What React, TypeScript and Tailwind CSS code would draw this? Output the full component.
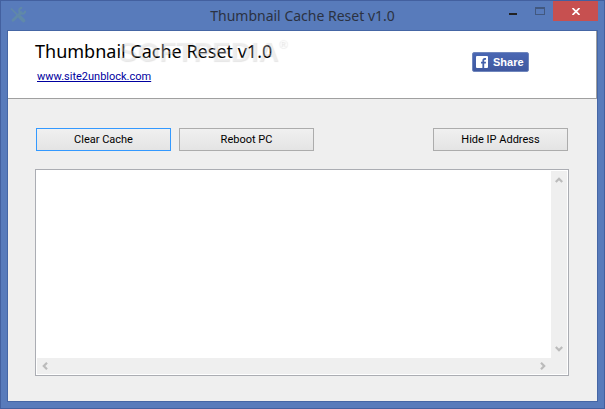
import { useState } from "react";

export default function App() {
  const [log, setLog] = useState("");

  return (
    <div className="flex min-h-screen flex-col border border-[#43609f] bg-[#587bbb] px-[6px] pb-[6px] font-['Noto_Sans',sans-serif] text-black">
      <TitleBar />
      <main className="flex grow flex-col border border-[#4566a5] bg-[#efefef]">
        <Header />
        <div className="flex grow flex-col pt-[29px] pr-7 pb-[25px] pl-[27px]">
          <div className="flex gap-2 px-px">
            <FormButton label="Clear Cache" focused onClick={() => setLog("")} />
            <FormButton label="Reboot PC" />
            <div className="grow" />
            <FormButton label="Hide IP Address" />
          </div>
          <LogBox value={log} onChange={setLog} />
        </div>
      </main>
    </div>
  );
}

function TitleBar() {
  return (
    <div className="grid h-[29px] grid-cols-[1fr_auto_1fr] items-start">
      {/* Crossed screwdriver and wrench */}
      <svg viewBox="0 0 16 16" className="mt-[6px] ml-[3px] h-4 w-4 text-[#6089a8]" fill="none" stroke="currentColor">
        <path d="M3 13.200 11 5.500" strokeWidth="2.800" strokeLinecap="round" />
        <path d="M15.200 3.800a3 3 0 1 1-3-3" strokeWidth="2" />
        <path d="M1 1.500 9.500 10" strokeWidth="1.600" />
        <path d="m10 10 3.500 3.500" strokeWidth="3.600" strokeLinecap="round" />
      </svg>
      <h1 className="pt-[5px] text-[14px] leading-5 text-[#2b3242]">Thumbnail Cache Reset v1.0</h1>
      <div className="flex justify-end">
        <button type="button" aria-label="Minimize" className="flex h-5 w-[27px] justify-center pt-3">
          <span className="h-[2px] w-2 bg-[#222222]" />
        </button>
        <button type="button" aria-label="Maximize" className="flex h-5 w-[27px] justify-center pt-[6px]">
          <span className="h-2 w-[10px] border border-t-2 border-[#42587f]" />
        </button>
        <button type="button" aria-label="Close" className="flex h-5 w-[45px] items-center justify-center bg-[#c75050]">
          <svg viewBox="0 0 8 7" className="h-[7px] w-2" stroke="white" strokeWidth="1.700">
            <path d="M.5 0 7.500 7M7.500 0 .5 7" />
          </svg>
        </button>
      </div>
    </div>
  );
}

function Header() {
  return (
    <header className="relative flex h-[68px] items-start justify-between border-r border-b border-[#a0a0a0] bg-white pr-[67px] pl-[27px]">
      <div className="flex flex-col items-start gap-[7px] pt-2">
        <h2 className="text-[18px] leading-6 whitespace-nowrap">Thumbnail Cache Reset v1.0</h2>
        <a href="#site" className="ml-[2px] font-['Roboto',sans-serif] text-[11px] leading-[14px] text-[#0000a0] underline">
          www.site2unblock.com
        </a>
      </div>
      <button type="button" className="mt-[21px] flex h-5 w-[57px] items-center gap-[5px] rounded-[2px] border border-[#6f86bd] bg-linear-to-b from-[#4a67b3] to-[#3f589f] pl-[3px] font-['Liberation_Sans',sans-serif] text-[11px] font-bold text-white">
        <svg viewBox="0 0 12 12" className="h-3 w-3 shrink-0">
          <rect width="12" height="12" rx="1" fill="white" />
          <path d="M6.400 12V7.500H5V5.700h1.400V4.400C6.400 2.900 7.300 2 8.700 2H10v1.800H9c-.5 0-.8.2-.8.8v1.100H10l-.2 1.800H8.200V12z" fill="#4360aa" />
        </svg>
        Share
      </button>
      {/* Watermark lies over the heading */}
      <span className="pointer-events-none absolute top-[7px] left-[110px] flex font-['Liberation_Sans',sans-serif] text-[28px] leading-7 font-bold text-white/30 [text-shadow:1px_1px_1px_rgb(0_0_0/0.1)]">
        SOFTPEDIA
        <span className="text-[12px] leading-3">®</span>
      </span>
    </header>
  );
}

function FormButton({ label, focused, onClick }: { label: string; focused?: boolean; onClick?: () => void }) {
  return (
    <button
      type="button"
      onClick={onClick}
      className={`h-[23px] w-[135px] border bg-linear-to-b from-[#f0f0f0] to-[#e4e4e4] font-['Roboto',sans-serif] text-[11px] leading-4 ${focused ? "border-[#3399ff]" : "border-[#acacac]"}`}
    >
      {label}
    </button>
  );
}

function LogBox({ value, onChange }: { value: string; onChange: (value: string) => void }) {
  return (
    <div className="mt-[18px] grid grow grid-cols-[1fr_16px] grid-rows-[1fr_16px] border border-[#abadb3] bg-white p-px">
      <textarea
        aria-label="Log"
        value={value}
        onChange={(e) => onChange(e.target.value)}
        className="resize-none p-1 text-[11px] outline-none"
      />
      <div className="flex flex-col items-center justify-between bg-[#efefef] py-[5px]">
        <Chevron path="M.8 6 4 2.800 7.200 6" />
        <Chevron path="M.8 2 4 5.200 7.200 2" />
      </div>
      <div className="flex items-center justify-between bg-[#efefef] px-1">
        <Chevron path="M6 .8 2.800 4 6 7.200" />
        <Chevron path="M2 .8 5.200 4 2 7.200" />
      </div>
      <div className="bg-[#efefef]" />
    </div>
  );
}

function Chevron({ path }: { path: string }) {
  return (
    <svg viewBox="0 0 8 8" className="h-2 w-2" fill="none" stroke="#bbbbbb" strokeWidth="2.200">
      <path d={path} />
    </svg>
  );
}
